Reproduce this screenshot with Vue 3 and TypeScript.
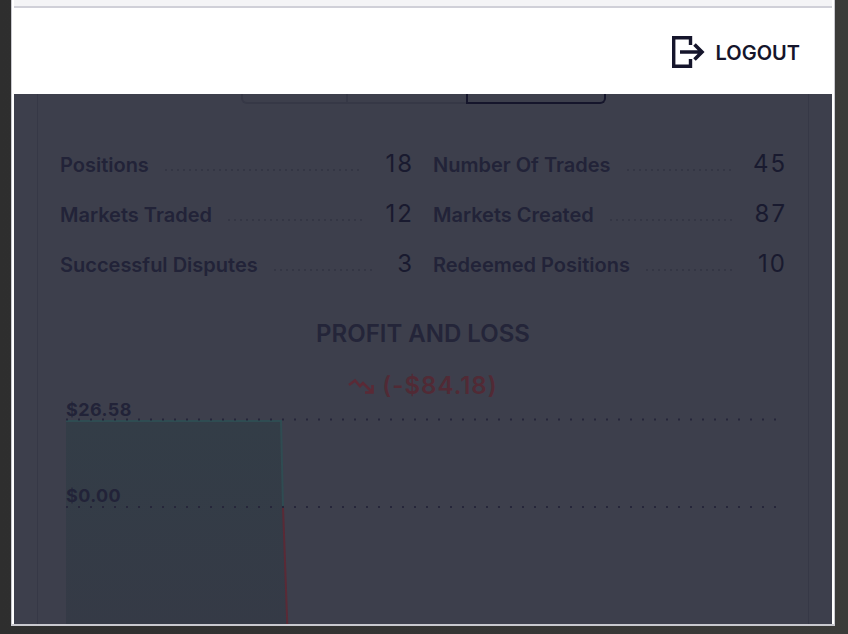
<script setup lang="ts">
interface Stat {
  label: string;
  value: number;
}

const stats: Stat[] = [
  { label: "Positions", value: 18 },
  { label: "Number Of Trades", value: 45 },
  { label: "Markets Traded", value: 12 },
  { label: "Markets Created", value: 87 },
  { label: "Successful Disputes", value: 3 },
  { label: "Redeemed Positions", value: 10 },
];
</script>

<template>
  <div class="screen">
    <div class="frame">
      <div class="topbar" />
      <header class="header">
        <button class="logout" type="button">
          <svg class="logout-icon" width="34" height="32" viewBox="0 0 34 32" fill="none">
            <path d="M18.500 9V1.700H1.700V30.300H18.500V23" stroke="#15152b" stroke-width="3.400" />
            <path d="M8 16H30M22.500 8.500L30 16L22.500 23.500" stroke="#15152b" stroke-width="3.600" />
          </svg>
          <span>LOGOUT</span>
        </button>
      </header>
      <main class="content">
        <section class="panel">
          <div class="tabs">
            <div class="tab tab-first" />
            <div class="tab tab-second" />
            <div class="tab tab-active" />
          </div>
          <div class="stats">
            <div v-for="stat in stats" :key="stat.label" class="stat">
              <span class="stat-label">{{ stat.label }}</span>
              <span class="stat-dots" />
              <span class="stat-value">{{ stat.value }}</span>
            </div>
          </div>
          <h2 class="title">PROFIT AND LOSS</h2>
          <div class="change">
            <svg width="26" height="18" viewBox="0 0 26 18" fill="none">
              <path d="M1 8L7 3.500L12 9L15 6L24.500 15.500M24.500 8V15.500H17" stroke="#5a2a36" stroke-width="2.600" />
            </svg>
            <span>(-$84.18)</span>
          </div>
          <div class="chart">
            <svg class="chart-svg" width="720" height="232" viewBox="0 0 720 232" fill="none">
              <defs>
                <linearGradient id="pnl-fill" x1="0" y1="0" x2="0" y2="1">
                  <stop offset="0" stop-color="#333d47" />
                  <stop offset="1" stop-color="#353a46" />
                </linearGradient>
              </defs>
              <path d="M0 23H215L217 109L221.500 232H0Z" fill="url(#pnl-fill)" />
              <path d="M0 23H215L217 109" stroke="#2f4c52" stroke-width="2" />
              <path d="M217 109L221.500 232" stroke="#5a2a36" stroke-width="2" />
              <path d="M0 21.500H712M0 109H712" stroke="#26263a" stroke-width="2" stroke-dasharray="2 10" />
            </svg>
            <span class="axis-label axis-top">$26.58</span>
            <span class="axis-label axis-zero">$0.00</span>
          </div>
        </section>
      </main>
    </div>
  </div>
</template>

<style>
html,
body {
  margin: 0;
  background: #383838;
}
</style>

<style scoped>
.screen {
  box-sizing: border-box;
  width: 848px;
  height: 634px;
  overflow: hidden;
  background: linear-gradient(90deg, #2e2e2e 0, #3b3b39 100%);
  padding-left: 11px;
  font-family: Inter, "Liberation Sans", sans-serif;
}

.frame {
  box-sizing: border-box;
  width: 824px;
  height: 626px;
  display: flex;
  flex-direction: column;
  background: #ffffff;
  border: solid #c9c9cf;
  border-width: 0 1px 2px;
  padding: 0 2px;
}

.topbar {
  flex: none;
  height: 6px;
  background: #f4f4f6;
  border-bottom: 2px solid #d0d0d8;
}

.header {
  box-sizing: border-box;
  flex: none;
  height: 86px;
  display: flex;
  align-items: center;
  justify-content: flex-end;
  padding: 4px 32px 0 0;
  background: #ffffff;
}

.logout {
  display: flex;
  align-items: center;
  gap: 10px;
  padding: 0;
  border: 0;
  background: none;
  color: #15152b;
  font: 600 20px Inter, "Liberation Sans", sans-serif;
}

.logout-icon {
  margin-top: -2px;
}

.content {
  flex: 1;
  min-height: 0;
  overflow: hidden;
  background: #3d3f4c;
  padding: 0 23px;
}

.panel {
  box-sizing: border-box;
  height: 100%;
  padding: 0 22px;
  border: solid #363846;
  border-width: 0 1px;
}

.tabs {
  display: flex;
  width: 365px;
  height: 10px;
  margin: 0 0 46px 181px;
}

.tab {
  box-sizing: border-box;
  border-bottom: 2px solid #363846;
}

.tab-first {
  width: 107px;
  border-left: 2px solid #363846;
  border-right: 2px solid #363846;
  border-bottom-left-radius: 6px;
}

.tab-second {
  width: 118px;
}

.tab-active {
  width: 140px;
  border: solid #15152b;
  border-width: 0 2px 2px;
  border-bottom-right-radius: 6px;
}

.stats {
  display: grid;
  grid-template-columns: 354px 354px;
  column-gap: 19px;
  row-gap: 20px;
}

.stat {
  height: 30px;
  display: flex;
  align-items: center;
  color: #222338;
}

.stat-label {
  flex: none;
  font-size: 20px;
  font-weight: 600;
  line-height: 30px;
}

.stat-dots {
  flex: 1;
  align-self: flex-end;
  height: 2px;
  margin: 0 22px 9px 16px;
  background: repeating-linear-gradient(90deg, #343644 0 2px, transparent 2px 6px);
}

.stat-value {
  flex: none;
  margin-top: -2px;
  color: #191a2f;
  font-size: 24px;
  font-weight: 400;
  letter-spacing: 2px;
  line-height: 28px;
}

.title {
  margin: 34px 0 0;
  text-align: center;
  color: #242539;
  font-size: 24px;
  font-weight: 600;
  line-height: 40px;
}

.change {
  display: flex;
  align-items: center;
  justify-content: center;
  gap: 8px;
  margin-top: 14px;
  color: #512a35;
  font-size: 24px;
  font-weight: 600;
  letter-spacing: 1px;
  line-height: 36px;
}

.chart {
  position: relative;
  height: 232px;
  margin-top: -6px;
}

.chart-svg {
  position: absolute;
  left: 6px;
  top: 0;
}

.axis-label {
  position: absolute;
  left: 6px;
  color: #222338;
  font-size: 18px;
  font-weight: 700;
  letter-spacing: 0.4px;
  line-height: 22px;
}

.axis-top {
  top: 1px;
}

.axis-zero {
  top: 87px;
}
</style>
